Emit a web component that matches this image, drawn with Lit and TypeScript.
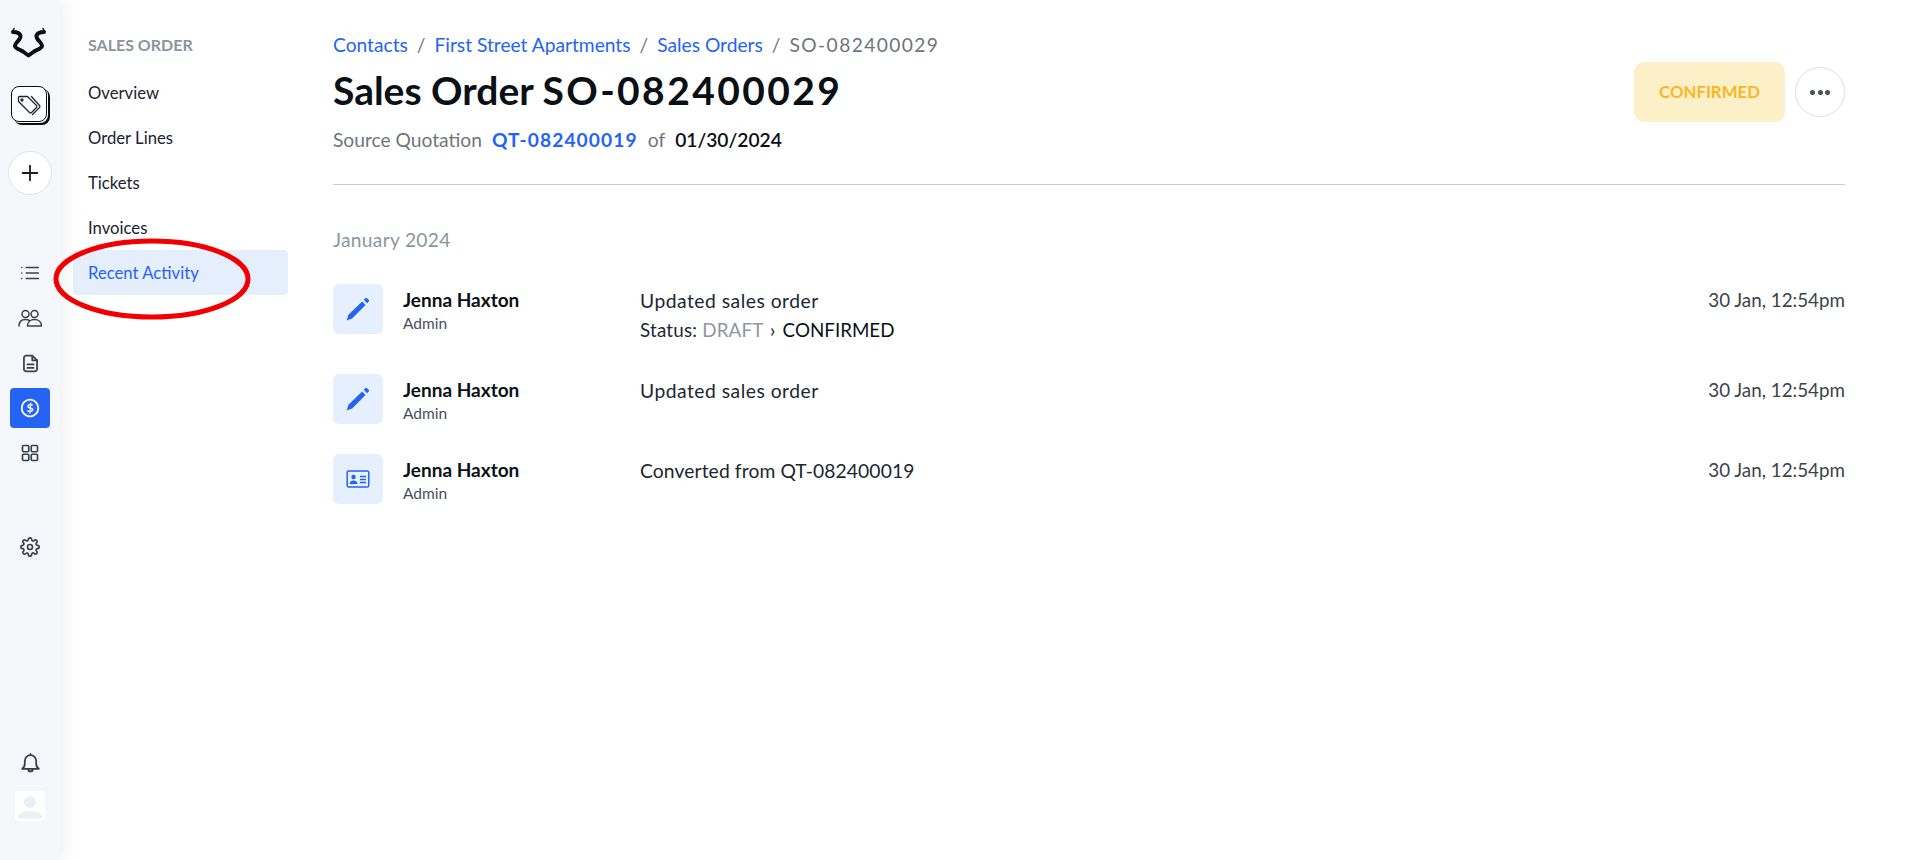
import { LitElement, html, css, svg } from "lit";
import { customElement } from "lit/decorators.js";

const i = (body: unknown, size = 20, vb = 24, sw = 2) => html`<svg width=${size} height=${size} viewBox="0 0 ${vb} ${vb}" fill="none" stroke="currentColor" stroke-width=${sw} stroke-linecap="round" stroke-linejoin="round">${body}</svg>`;

const pencil = html`<svg width="26" height="26" viewBox="0 0 24 24" fill="#2563f5"><path d="M1.500 22.500l1.700-5.200L15.800 5l3.200 3.200L6.500 20.800z"/><path d="M17.300 3.500l1.500-1.500a1.100 1.100 0 0 1 1.600 0l1.500 1.500a1.100 1.100 0 0 1 0 1.600l-1.500 1.500z"/></svg>`;
const card = html`<svg width="24" height="20" viewBox="0 0 24 20" fill="none" stroke="#2563f5" stroke-width="1.5"><rect x="1.200" y="2" width="21.600" height="16" rx="1.600"/><circle cx="7.500" cy="8" r="2.200" fill="#2563f5" stroke="none"/><path d="M3.500 15c.3-2.400 2-3.400 4-3.400s3.700 1 4 3.400z" fill="#2563f5" stroke="none"/><path d="M14 7.500h6M14 10.500h6M14 13.500h6" stroke-width="1.300"/></svg>`;

const rows = [
  { icon: pencil, text: html`<div>Updated sales order</div><div class="status">Status: <span class="draft">DRAFT</span> <span class="sep">›</span> <span class="conf">CONFIRMED</span></div>`, cls: "tall" },
  { icon: pencil, text: html`<div>Updated sales order</div>`, cls: "mid" },
  { icon: card, text: html`<div class="conv">Converted from QT-082400019</div>`, cls: "" },
];

@customElement("app-root")
export class AppRoot extends LitElement {
  static styles = css`
    :host { display: block; height: 860px; overflow: hidden; background: #fff; font-family: "Lato", "Open Sans", sans-serif; color: #0f1720; position: relative; }
    .page { display: flex; height: 860px; }
    .rail { width: 60px; flex: none; background: #f5f7fa; box-shadow: 4px 0 14px rgba(60,70,90,.08); display: flex; flex-direction: column; align-items: center; color: #39424e; position: relative; z-index: 1; }
    .logo { margin: 27px 3px 0 0; height: 31px; color: #0b0f14; }
    .tag { margin: 28px 3px 0 0; width: 36px; height: 36px; box-sizing: border-box; border: 1.5px solid #0b0f14; border-radius: 8px; background: #fff; box-shadow: 1px 1px 0 #fff, 2px 2px 0 #0b0f14, 3px 3px 0 #0b0f14; display: flex; color: #1c2630; }
    .plus { margin-top: 29px; width: 44px; height: 44px; box-sizing: border-box; border-radius: 50%; border: 1px solid #dfe3e8; background: #fff; display: flex; align-items: center; justify-content: center; color: #16202a; }
    .navs { margin-top: 58px; display: flex; flex-direction: column; align-items: center; }
    .nav { width: 40px; height: 40px; margin-bottom: 5px; display: flex; align-items: center; justify-content: center; border-radius: 4px; color: #39424e; }
    .nav.on { background: #2563f5; color: #fff; }
    .gear { margin-top: 49px; }
    .spacer { flex: 1; }
    .bell { height: 22px; margin-bottom: 17px; display: flex; align-items: center; color: #333c47; }
    .avatar { width: 30px; height: 30px; border-radius: 3px; background: #fff; margin-bottom: 39px; overflow: hidden; }
    .side { width: 240px; flex: none; padding: 35px 12px 0 13px; box-sizing: border-box; }
    .side h4 { margin: 0 0 0 15px; font-size: 16px; line-height: 20px; font-weight: 700; color: #8c959e; height: 24px; }
    .menu { margin-top: 11px; display: flex; flex-direction: column; }
    .menu a { height: 45px; padding-left: 15px; border-radius: 4px; display: flex; align-items: center; font-size: 16.700px; color: #1a232d; }
    .menu a.on { background: #e5eefd; color: #2563f5; }
    .main { flex: 1; padding: 32px 60px 0 33px; min-width: 0; }
    .crumbs { font-size: 19.200px; line-height: 26px; color: #6e757c; display: flex; gap: 9px; }
    .crumbs a { color: #2563f5; }
    .ids { letter-spacing: 1.400px; }
    .head { display: flex; justify-content: space-between; border-bottom: 1px solid #c5cad4; height: 153px; box-sizing: border-box; }
    h1 { margin: 10px 0 0; font-size: 39px; line-height: 44px; font-weight: 700; color: #0b1016; }
    h1 span { letter-spacing: 2.400px; }
    .src { margin-top: 15px; font-size: 19.200px; line-height: 26px; color: #6e757c; display: flex; gap: 10px; }
    .src b { color: #2563f5; font-weight: 700; letter-spacing: 1.100px; }
    .src strong { color: #0b1016; font-weight: 600; }
    .acts { display: flex; gap: 10px; align-items: flex-start; margin-top: 30px; }
    .badge { width: 151px; height: 60px; border-radius: 10px; background: #fcf0c8; color: #fbb624; font-size: 16.800px; font-weight: 700; display: flex; align-items: center; justify-content: center; padding-bottom: 1px; box-sizing: border-box; }
    .more { margin-top: 5px; width: 50px; height: 50px; box-sizing: border-box; border-radius: 50%; border: 1px solid #dcdfe3; display: flex; align-items: center; justify-content: center; gap: 2.500px; }
    .more i { width: 5px; height: 5px; border-radius: 50%; background: #4a525c; }
    .month { margin-top: 42px; font-size: 19.200px; letter-spacing: .3px; line-height: 26px; color: #8c959e; }
    .row { display: grid; grid-template-columns: 70px 237px 1fr auto; }
    .row.first { margin-top: 31px; }
    .row.tall { height: 90px; }
    .row.mid { height: 80px; }
    .ic { width: 50px; height: 50px; background: #e6effe; border-radius: 6px; display: flex; align-items: center; justify-content: center; }
    .who { padding-top: 4px; }
    .name { font-size: 19px; line-height: 24px; font-weight: 700; color: #0b1016; }
    .role { font-size: 15.500px; line-height: 22px; color: #47505a; }
    .txt { padding-top: 5px; font-size: 19.300px; letter-spacing: .5px; line-height: 24px; color: #1c2630; }
    .conv { letter-spacing: .1px; }
    .status { margin-top: 5px; font-size: 18.800px; letter-spacing: .2px; }
    .draft { color: #8f979f; }
    .sep { color: #0b1016; margin: 0 2px; }
    .conf { color: #0b1016; letter-spacing: 0; }
    .time { padding-top: 4px; font-size: 18.800px; line-height: 24px; color: #3b434d; }
    .circle { position: absolute; left: 52px; top: 236px; z-index: 2; pointer-events: none; }
  `;

  render() {
    return html`<div class="page">
      <div class="rail">
        <div class="logo"><svg width="36" height="31" viewBox="0 0 36 31" fill="none" stroke="currentColor" stroke-width="4" stroke-linejoin="round" stroke-linecap="round"><path d="M2 5C6 5 9.500 6.500 9.500 9.500 9.500 13 4 15.500 4 19c0 2.500 5 3.500 8 5.500l5.500 4 5.500-4c3-2 8-3 8-5.500 0-3.500-5.500-6-5.500-9.500C25.500 6.500 29 5 33 5"/><path d="M1.500 4.500L3 1.500M33.500 4.500L32 1.500" stroke-width="1.500"/></svg></div>
        <div class="tag"><svg width="33" height="33" viewBox="1.500 1.500 33 33" fill="none" stroke="currentColor" stroke-width="1.300" stroke-linejoin="round" stroke-linecap="round"><path d="M8 16v-4q0-1 1-1h8l9 9q1 1 0 2l-5 5q-1 1-2 0z"/><circle cx="11.500" cy="14.500" r="1"/><path d="M21 11l8 9q1 1 0 2l-7 7"/></svg></div>
        <div class="plus">${i(svg`<path d="M12 4v16M4 12h16"/>`, 22)}</div>
        <div class="navs">
          <div class="nav">${i(svg`<path d="M8 6h13M8 12h13M8 18h13M3 6h.01M3 12h.01M3 18h.01"/>`, 22, 24, 1.800)}</div>
          <div class="nav">${i(svg`<circle cx="7.500" cy="8" r="3.500"/><path d="M1 20c0-4 2.500-6.500 6.500-6.500 1.500 0 3 .4 4 1.200"/><circle cx="16.500" cy="8" r="3.500"/><path d="M9.500 20c0-4 3-6.500 7-6.500s7 2.500 7 6.500z"/>`, 24, 24, 1.500)}</div>
          <div class="nav">${i(svg`<path d="M14 3H7a2.500 2.500 0 0 0-2.500 2.500v13A2.500 2.500 0 0 0 7 21h10a2.500 2.500 0 0 0 2.500-2.500V8.500z"/><path d="M14 3v5.500h5.500M8.500 13h7M8.500 17h7"/>`, 21)}</div>
          <div class="nav on"><svg width="20" height="20" viewBox="0 0 20 20" fill="none" stroke="currentColor" stroke-width="1.800"><circle cx="10" cy="10" r="8.300"/><text x="10" y="14.300" text-anchor="middle" font-size="12" font-weight="700" font-family="Lato, sans-serif" fill="currentColor" stroke="none">$</text></svg></div>
          <div class="nav">${i(svg`<rect x="3" y="3" width="7.500" height="7.500" rx="1.200"/><rect x="13.500" y="3" width="7.500" height="7.500" rx="1.200"/><rect x="3" y="13.500" width="7.500" height="7.500" rx="1.200"/><rect x="13.500" y="13.500" width="7.500" height="7.500" rx="1.200"/>`, 20)}</div>
          <div class="nav gear">${i(svg`<circle cx="12" cy="12" r="3"/><path d="M19.400 15a1.700 1.700 0 0 0 .3 1.800l.1.100a2 2 0 1 1-2.800 2.800l-.1-.1a1.700 1.700 0 0 0-2.900 1.200V21a2 2 0 1 1-4 0v-.1a1.700 1.700 0 0 0-2.900-1.200l-.1.100a2 2 0 1 1-2.800-2.800l.1-.1a1.700 1.700 0 0 0-1.200-2.900H3a2 2 0 1 1 0-4h.1a1.700 1.700 0 0 0 1.200-2.900l-.1-.1a2 2 0 1 1 2.800-2.800l.1.100a1.700 1.700 0 0 0 2.900-1.200V3a2 2 0 1 1 4 0v.1a1.700 1.700 0 0 0 2.900 1.200l.1-.1a2 2 0 1 1 2.800 2.800l-.1.100a1.700 1.700 0 0 0 1.200 2.900h.1a2 2 0 1 1 0 4h-.1a1.700 1.700 0 0 0-1.500 1z"/>`, 20)}</div>
        </div>
        <div class="spacer"></div>
        <div class="bell">${i(svg`<path d="M2.500 18c1.800-1 3-2.500 3-6V9a6.500 6.500 0 0 1 13 0v3c0 3.500 1.200 5 3 6z"/><path d="M9.500 18.500c0 3.500 5 3.500 5 0M12 1v1.500"/>`, 21)}</div>
        <div class="avatar"><svg width="30" height="30" viewBox="0 0 30 30" fill="#eceff3"><circle cx="15" cy="11" r="6"/><path d="M3 26c0-4 6-6 12-6s12 2 12 6c0 1-1 1.500-2 1.500H5c-1 0-2-.5-2-1.500z"/></svg></div>
      </div>
      <div class="side">
        <h4>SALES ORDER</h4>
        <div class="menu">
          <a>Overview</a><a>Order Lines</a><a>Tickets</a><a>Invoices</a><a class="on">Recent Activity</a>
        </div>
      </div>
      <div class="main">
        <div class="head">
          <div>
            <div class="crumbs"><a>Contacts</a><span>/</span><a>First Street Apartments</a><span>/</span><a>Sales Orders</a><span>/</span><span class="ids">SO-082400029</span></div>
            <h1>Sales Order <span>SO-082400029</span></h1>
            <div class="src"><span>Source Quotation</span><b>QT-082400019</b><span>of</span><strong>01/30/2024</strong></div>
          </div>
          <div class="acts"><div class="badge">CONFIRMED</div><div class="more"><i></i><i></i><i></i></div></div>
        </div>
        <div class="month">January 2024</div>
        ${rows.map((r, n) => html`<div class="row ${r.cls} ${n === 0 ? "first" : ""}">
          <div class="ic">${r.icon}</div>
          <div class="who"><div class="name">Jenna Haxton</div><div class="role">Admin</div></div>
          <div class="txt">${r.text}</div>
          <div class="time">30 Jan, 12:54pm</div>
        </div>`)}
      </div>
    </div>
    <svg class="circle" width="204" height="88" viewBox="0 0 204 88" fill="none"><ellipse cx="100" cy="43" rx="96" ry="38" stroke="#f00000" stroke-width="5"/></svg>`;
  }
}
